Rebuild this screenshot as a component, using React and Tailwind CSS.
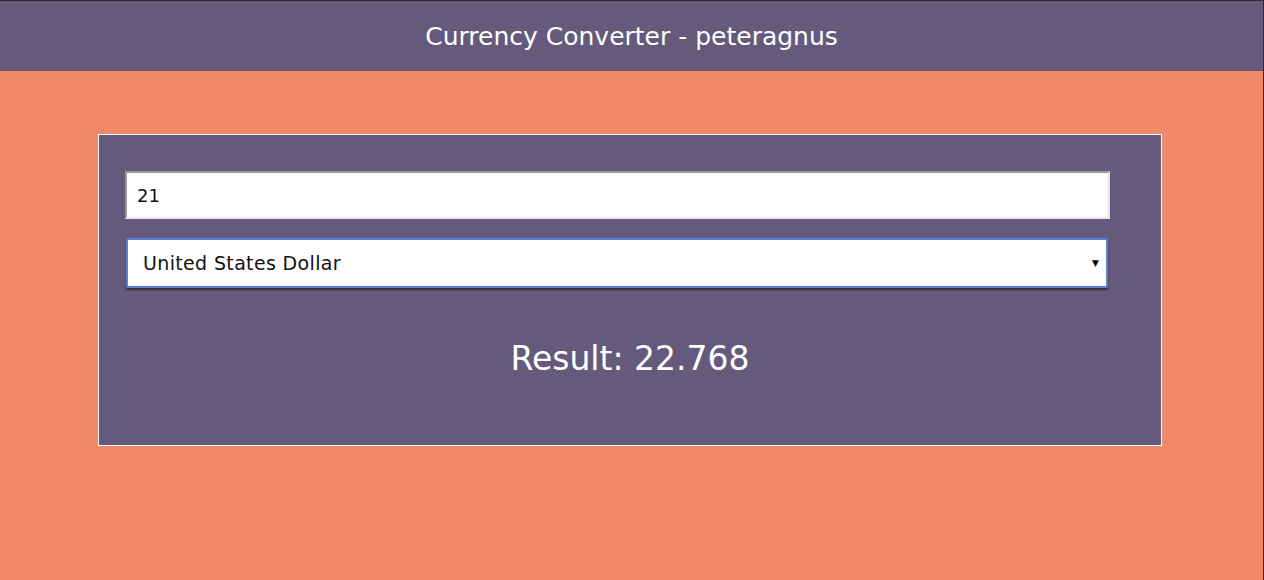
import React, { useState } from 'react';

export default function App() {
  const [amount, setAmount] = useState('21');
  const [currency, setCurrency] = useState('USD');

  return (
    <div className="h-[580px] w-full overflow-hidden border-t border-r border-[#2b2b2b] bg-[#f0896a]" style={{ fontFamily: '"DejaVu Sans", Inter, sans-serif' }}>
      <header className="flex h-[70px] items-center justify-center bg-[#655a7c] pt-[2px]">
        <h1 className="text-[25px] text-white">Currency Converter - peteragnus</h1>
      </header>

      <div className="ml-[98px] mt-[63px] h-[312px] w-[1064px] border border-white bg-[#655a7c] pl-[26px] pt-[36px]">
        <input
          value={amount}
          onChange={e => setAmount(e.target.value)}
          className="block h-[48px] w-[985px] border-2 border-t-[#999] border-l-[#999] border-b-[#e5e5e5] border-r-[#e5e5e5] bg-white px-[10px] text-[18px] text-[#111] outline-none"
        />
        <div className="relative mt-[19px] ml-[1px] w-[982px]">
          <select
            value={currency}
            onChange={e => setCurrency(e.target.value)}
            className="block h-[50px] w-full appearance-none rounded-[2px] border-2 border-[#5a80d6] bg-white px-[15px] text-[19px] tracking-[0.35px] text-[#111] shadow-[0_2px_2px_rgba(0,0,0,0.5)] outline-none"
          >
            <option value="USD">United States Dollar</option>
            <option value="EUR">Euro</option>
            <option value="GBP">British Pound</option>
          </select>
          <span className="pointer-events-none absolute right-[9px] top-[19px] text-[9px] text-black">▼</span>
        </div>
        <p className="mt-[46px] pr-[26px] text-center text-[33px] text-white">Result: 22.768</p>
      </div>
    </div>
  );
}
